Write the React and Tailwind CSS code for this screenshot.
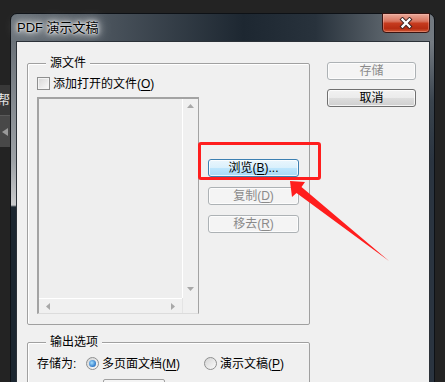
import React from "react"

function Mn({ children }) {
  return <span className="underline underline-offset-[2px]">{children}</span>
}

function Btn({ children, kind = "normal" }) {
  const styles = {
    normal: "border-[#707070] bg-[linear-gradient(to_bottom,#f2f2f2_0%,#ebebeb_50%,#dddddd_51%,#cfcfcf_100%)] text-black",
    hot: "border-[#3c7fb1] bg-[linear-gradient(to_bottom,#eaf6fd_0%,#d9f0fc_50%,#bee6fd_51%,#a7d9f5_100%)] text-black",
    disabled: "border-[#adb2b5] bg-[#f4f4f4] text-[#8a8a8a]",
  }
  return (
    <div className={`flex h-[18px] items-center justify-center rounded-[3px] border text-[12px] leading-none shadow-[inset_0_0_0_1px_rgba(255,255,255,0.75)] ${styles[kind]}`}>
      {children}
    </div>
  )
}

function Checkbox() {
  return (
    <div className="h-[13px] w-[13px] border border-[#8e8f8f] bg-[linear-gradient(135deg,#d6d6d6,#fbfbfb)] shadow-[inset_0_0_0_1px_#f4f4f4]" />
  )
}

function Radio({ checked }) {
  return (
    <div className="flex h-[13px] w-[13px] items-center justify-center rounded-full border border-[#8e8f8f] bg-[linear-gradient(135deg,#d4d4d4,#fbfbfb)]">
      {checked && (
        <div className="h-[7px] w-[7px] rounded-full bg-[radial-gradient(circle_at_40%_40%,#a6e0ff,#2d78c8_70%,#1c4f90)]" />
      )}
    </div>
  )
}

function Tri({ dir }) {
  const pts = {
    up: "0,4 3.5,0 7,4",
    down: "0,0 3.5,4 7,0",
    left: "4,0 0,3.5 4,7",
    right: "0,0 4,3.5 0,7",
  }
  const vertical = dir === "up" || dir === "down"
  return (
    <svg width={vertical ? 7 : 4} height={vertical ? 4 : 7}>
      <polygon points={pts[dir]} fill="#a8a8a8" />
    </svg>
  )
}

function GroupBox({ label, className, children }) {
  return (
    <div className={`relative shrink-0 rounded-[2px] border border-[#a0a0a0] shadow-[inset_1px_1px_0_#fff] ${className}`}>
      <span className="absolute -top-[8px] left-[18px] bg-[#f0f0f0] px-[4px] text-[12px] leading-[14px] text-black">
        {label}
      </span>
      {children}
    </div>
  )
}

export default function App() {
  return (
    <div className="relative flex h-[382px] w-[445px] items-start overflow-hidden bg-[#232323] font-['Liberation_Sans','Noto_Sans_CJK_SC',sans-serif]">
      {/* background app peeking on the left */}
      <div className="flex w-[10px] shrink-0 flex-col">
        <div className="h-[85px]" />
        <div className="flex h-[30px] items-center justify-end overflow-hidden bg-[#383838] text-[13px] text-[#e4e4e4]">
          <span>帮</span>
        </div>
        <div className="h-px bg-[#5a5a5a]" />
        <div className="flex h-[31px] items-center bg-[#484848] pl-[2px]">
          <svg width="6" height="8">
            <polygon points="6,0 0,4 6,8" fill="#9a9a9a" />
          </svg>
        </div>
      </div>

      {/* dialog window */}
      <div className="mt-[13px] flex w-[425px] shrink-0 flex-col rounded-t-[7px] border border-[#0d1116] bg-[linear-gradient(to_right,#6b737a_0%,#4b545d_22%,#1d2731_55%,#28323c_72%,#687077_93%,#747a81_100%)]">
        <div className="flex h-[27px] shrink-0 justify-between">
          <div className="self-center pl-[6px] text-[13px] leading-[15px] text-black [text-shadow:0_0_14px_#fff,0_0_9px_#fff,0_0_5px_#fff,0_0_2px_#fff]">
            PDF 演示文稿
          </div>
          <div className="-mt-px mr-[4px] flex h-[20px] w-[48px] items-center justify-center rounded-b-[4px] border border-[#3a1411] bg-[linear-gradient(to_bottom,#e9a899_0%,#d9755f_40%,#c63b1e_52%,#b62c12_80%,#cf5a36_100%)] shadow-[inset_0_0_0_1px_rgba(255,200,190,0.35)]">
            <svg width="14" height="12" viewBox="0 0 14 12">
              <path d="M3.5 2.5 L10.5 9.5 M10.5 2.5 L3.5 9.5" stroke="#3b2322" strokeWidth="4.2" strokeLinecap="square" />
              <path d="M3.5 2.5 L10.5 9.5 M10.5 2.5 L3.5 9.5" stroke="#ffffff" strokeWidth="2.3" strokeLinecap="square" />
            </svg>
          </div>
        </div>

        <div className="flex">
          <div className="w-[5px] shrink-0 bg-[linear-gradient(to_bottom,#6a7178_0px,#9ca1a6_120px,#c9cbcd_164px,#1b2630_166px,#1b2630_100%)]" />
          <div className="flex flex-1 border border-[#2b3138] bg-[#f0f0f0] pl-[10px] text-[12px] leading-[14px] text-black">
            {/* left column */}
            <div className="flex w-[283px] shrink-0 flex-col pt-[21px]">
              <GroupBox label="源文件" className="h-[262px] pl-[9px] pt-[13px]">
                <div className="flex h-[13px] items-center gap-[3px]">
                  <Checkbox />
                  <span>添加打开的文件(<Mn>O</Mn>)</span>
                </div>
                <div className="mt-[7px] flex">
                  <div className="flex h-[217px] w-[162px] flex-col border-b border-l-2 border-r border-t-2 border-[#a3a3a3] border-b-[#dcdcdc] bg-[#eeeeee]">
                    <div className="flex flex-1">
                      <div className="flex-1" />
                      <div className="flex w-[16px] flex-col items-center justify-between border-l border-white bg-[#f0f0f0] pb-[7px] pt-[5px]">
                        <Tri dir="up" />
                        <Tri dir="down" />
                      </div>
                    </div>
                    <div className="flex h-[15px]">
                      <div className="flex flex-1 items-center justify-between border-t border-white bg-[#f0f0f0] px-[7px]">
                        <Tri dir="left" />
                        <Tri dir="right" />
                      </div>
                      <div className="w-[16px] border-l border-[#e4e4e4] bg-[#f0f0f0]" />
                    </div>
                  </div>
                  <div className="ml-[9px] flex w-[91px] flex-col gap-[10px] pt-[62px]">
                    <Btn kind="hot">
                      <span>浏览(<Mn>B</Mn>)...</span>
                    </Btn>
                    <Btn kind="disabled">
                      <span>复制(<Mn>D</Mn>)</span>
                    </Btn>
                    <Btn kind="disabled">
                      <span>移去(<Mn>R</Mn>)</span>
                    </Btn>
                  </div>
                </div>
              </GroupBox>

              <GroupBox label="输出选项" className="mt-[17px] h-[80px] pl-[9px] pt-[14px]">
                <div className="flex h-[13px] items-center">
                  <span className="w-[49px]">存储为:</span>
                  <Radio checked />
                  <span className="ml-[3px] w-[102px]">多页面文档(<Mn>M</Mn>)</span>
                  <Radio />
                  <span className="ml-[3px]">演示文稿(<Mn>P</Mn>)</span>
                </div>
                <div className="ml-[66px] mt-[9px] h-[20px] w-[62px] rounded-[2px] border border-[#a0a0a0] bg-[#f4f4f4]" />
              </GroupBox>
            </div>

            {/* right column */}
            <div className="ml-[17px] flex w-[89px] flex-col gap-[9px] pt-[20px]">
              <Btn kind="disabled">存储</Btn>
              <Btn kind="normal">取消</Btn>
            </div>
          </div>
          <div className="w-[4px] shrink-0 bg-[linear-gradient(to_bottom,#767c83_0px,#3a444e_60px,#2a3440_120px,#2a3440_100%)]" />
        </div>
      </div>

      {/* red annotation */}
      <div className="pointer-events-none absolute left-[198px] top-[142px] h-[38px] w-[123px] rounded-[3px] border-[3px] border-[#ff1e1e]" />
      <svg className="pointer-events-none absolute left-0 top-0" width="445" height="382">
        <polygon points="290,181 305,182 301.5,187 389,261 296.5,193 292,197" fill="#ff1e1e" />
      </svg>
    </div>
  )
}
